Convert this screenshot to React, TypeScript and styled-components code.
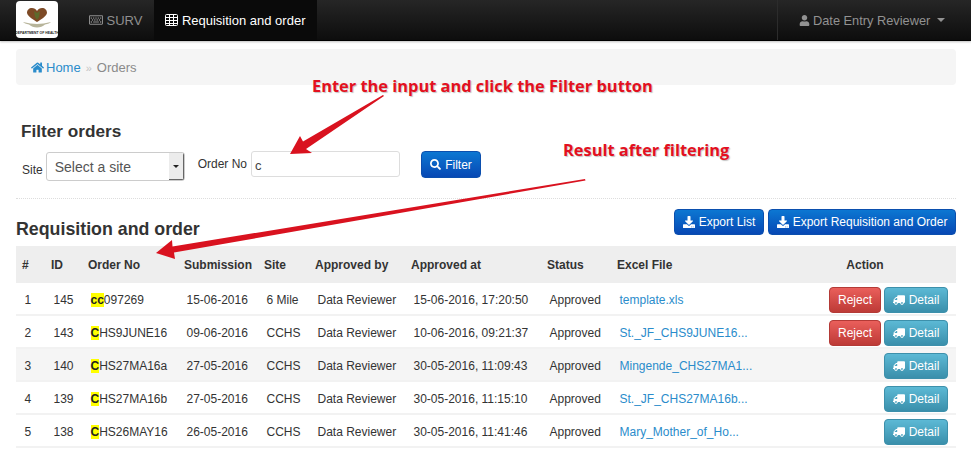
import React from 'react';
import styled, { createGlobalStyle } from 'styled-components';
import { FaDownload, FaHome, FaRegKeyboard, FaSearch, FaTruck, FaUser } from 'react-icons/fa';

const GlobalStyle = createGlobalStyle`
  html, body {
    margin: 0;
    padding: 0;
    background: #fff;
    color: #333;
    font-family: "Liberation Sans", Arial, sans-serif;
    font-size: 12px;
    overflow: hidden;
  }
`;

const Page = styled.div`
  position: relative;
  width: 971px;
  height: 451px;
  overflow: hidden;
`;

const Navbar = styled.nav`
  display: flex;
  align-items: stretch;
  height: 40px;
  padding-left: 16px;
  background: linear-gradient(#262626, #0d0d0d);
  border-bottom: 1px solid #000;
  box-shadow: 0 1px 2px rgba(0, 0, 0, 0.25);
`;

const Logo = styled.svg`
  width: 42px;
  height: 37px;
  margin-top: 1px;
  margin-right: 20px;
`;

const NavItem = styled.a<{ $active?: boolean }>`
  display: flex;
  align-items: center;
  gap: 3.5px;
  padding: 0 12px 0 11px;
  font-size: 13px;
  color: ${p => (p.$active ? '#fff' : '#8f8f8f')};
  background: ${p => (p.$active ? '#0a0a0a' : 'transparent')};

  svg {
    flex: none;
  }
`;

const UserMenu = styled.a`
  display: flex;
  align-items: center;
  gap: 3px;
  margin-left: auto;
  width: 194px;
  box-sizing: border-box;
  padding-left: 21px;
  font-size: 12.8px;
  color: #929292;
  border-left: 1px solid #2c2c2c;
`;

const Caret = styled.span`
  width: 0;
  height: 0;
  margin-left: 4px;
  border-left: 4px solid transparent;
  border-right: 4px solid transparent;
  border-top: 4px solid #929292;
`;

const Main = styled.main`
  padding: 8px 15px 0 16px;
`;

const Breadcrumb = styled.div`
  display: flex;
  align-items: center;
  height: 36px;
  padding: 1px 0 0 15px;
  box-sizing: border-box;
  background: #f5f5f5;
  border-radius: 4px;
  font-size: 13px;
  color: #8a8a8a;
`;

const Link = styled.a`
  color: #2a8ccb;
  text-decoration: none;
`;

const HomeLink = styled(Link)`
  display: flex;
  align-items: center;
  gap: 2px;
`;

const Separator = styled.span`
  margin: 0 5px;
  color: #c4c4c4;
  font-size: 11px;
`;

const FilterPanel = styled.section`
  padding: 37px 0 17px 5px;
  border-bottom: 1px dotted #ddd;
`;

const FilterTitle = styled.h3`
  margin: 0 0 11px;
  font-size: 17.2px;
  line-height: 18px;
  font-weight: bold;
  color: #333;
`;

const FilterRow = styled.div`
  display: flex;
  align-items: flex-start;
`;

const Label = styled.label<{ $top: number; $left: number }>`
  margin-top: ${p => p.$top}px;
  margin-left: ${p => p.$left}px;
  margin-right: 3px;
  font-size: 12px;
  line-height: 15px;
`;

const SelectBox = styled.div`
  display: flex;
  align-items: stretch;
  width: 139px;
  height: 29px;
  margin-top: 1px;
  box-sizing: border-box;
  background: #fff;
  border: 1px solid #ccc;
  border-radius: 3px;
  overflow: hidden;
  font-size: 14px;
  color: #555;
`;

const SelectValue = styled.span`
  flex: 1;
  padding: 6px 0 0 8px;
`;

const SelectArrow = styled.span`
  display: flex;
  align-items: center;
  justify-content: center;
  width: 14px;
  background: #ececec;
  border-right: 1px solid #666;
  border-bottom: 1px solid #666;

  &::after {
    content: '';
    border-left: 3px solid transparent;
    border-right: 3px solid transparent;
    border-top: 3px solid #222;
  }
`;

const TextField = styled.div`
  width: 149px;
  height: 26px;
  margin-left: 1px;
  box-sizing: border-box;
  padding: 6px 0 0 3px;
  background: #fff;
  border: 1px solid #ddd;
  border-radius: 3px;
  font-size: 13px;
  color: #444;
`;

const Button = styled.a<{ $tone: 'blue' | 'red' | 'teal'; $width: number }>`
  display: inline-flex;
  align-items: center;
  justify-content: center;
  gap: 4px;
  width: ${p => p.$width}px;
  height: 26px;
  box-sizing: border-box;
  border-radius: 4px;
  font-size: 12px;
  color: #fff;
  border: 1px solid
    ${p => ({ blue: '#0b4fae', red: '#b33a36', teal: '#3d90ab' }[p.$tone])};
  background: ${p =>
    ({
      blue: 'linear-gradient(#0c77d2, #0748b4)',
      red: 'linear-gradient(#ea5f5b, #bd3a36)',
      teal: 'linear-gradient(#5cb9d5, #3a8fab)',
    }[p.$tone])};
`;

const FilterButton = styled(Button)`
  margin-left: 21px;
  height: 27px;
`;

const TitleBar = styled.div`
  display: flex;
  justify-content: space-between;
  align-items: flex-start;
  height: 37px;
  padding-top: 10px;
`;

const ListTitle = styled.h2`
  margin: 10px 0 0;
  font-size: 17.8px;
  line-height: 20px;
  font-weight: bold;
  color: #333;
`;

const ExportGroup = styled.div`
  display: flex;
  gap: 4px;
`;

const Table = styled.table`
  width: 940px;
  table-layout: fixed;
  border-collapse: collapse;
`;

const HeadCell = styled.th<{ $center?: boolean }>`
  height: 37px;
  padding: ${p => (p.$center ? '0 2px 0 0' : '0 0 0 6px')};
  background: #eee;
  text-align: ${p => (p.$center ? 'center' : 'left')};
  font-size: 12px;
  font-weight: bold;
  color: #333;
`;

const Row = styled.tr<{ $shaded?: boolean }>`
  background: ${p => (p.$shaded ? '#f5f5f5' : '#fff')};
`;

const Cell = styled.td<{ $right?: boolean }>`
  height: 29px;
  padding: 2px ${p => (p.$right ? '8px' : '0')} 0 ${p => (p.$right ? '0' : '8.5px')};
  border-bottom: 2px solid #f2f2f2;
  text-align: ${p => (p.$right ? 'right' : 'left')};
  font-size: 12px;
  color: #333;
  white-space: nowrap;
`;

const Hit = styled.b`
  background: #ff0;
  color: #222;
`;

const Actions = styled.div`
  display: flex;
  justify-content: flex-end;
  gap: 3px;
`;

const FlippedTruck = styled(FaTruck)`
  transform: scaleX(-1);
`;

const Overlay = styled.svg`
  position: absolute;
  inset: 0;
  pointer-events: none;
`;

const Note = styled.div<{ $x: number; $y: number }>`
  position: absolute;
  left: ${p => p.$x}px;
  top: ${p => p.$y}px;
  font-family: "Open Sans", sans-serif;
  font-size: 16.4px;
  line-height: 20px;
  font-weight: bold;
  color: #e3101f;
  white-space: nowrap;
  text-shadow: 1px 1px 1px rgba(120, 120, 120, 0.45);
`;

const TableIcon = () => (
  <svg width="13" height="12" viewBox="0 0 13 12" fill="none" stroke="currentColor" strokeWidth="1">
    <rect x="0.5" y="0.5" width="12" height="11" rx="1" />
    <path d="M0.5 3.5h12M0.5 6.5h12M0.5 9.5h12M4.5 0.5v11M8.5 0.5v11" />
  </svg>
);

const columns = [
  { label: '#', width: 29 },
  { label: 'ID', width: 37 },
  { label: 'Order No', width: 96 },
  { label: 'Submission', width: 80 },
  { label: 'Site', width: 51 },
  { label: 'Approved by', width: 96 },
  { label: 'Approved at', width: 136 },
  { label: 'Status', width: 70 },
  { label: 'Excel File', width: 165 },
  { label: 'Action', width: 180 },
];

const orders = [
  { id: 145, hit: 'cc', rest: '097269', date: '15-06-2016', site: '6 Mile', at: '15-06-2016, 17:20:50', file: 'template.xls', reject: true },
  { id: 143, hit: 'C', rest: 'HS9JUNE16', date: '09-06-2016', site: 'CCHS', at: '10-06-2016, 09:21:37', file: 'St._JF_CHS9JUNE16...', reject: true },
  { id: 140, hit: 'C', rest: 'HS27MA16a', date: '27-05-2016', site: 'CCHS', at: '30-05-2016, 11:09:43', file: 'Mingende_CHS27MA1...', reject: false },
  { id: 139, hit: 'C', rest: 'HS27MA16b', date: '27-05-2016', site: 'CCHS', at: '30-05-2016, 11:15:10', file: 'St._JF_CHS27MA16b...', reject: false },
  { id: 138, hit: 'C', rest: 'HS26MAY16', date: '26-05-2016', site: 'CCHS', at: '30-05-2016, 11:41:46', file: 'Mary_Mother_of_Ho...', reject: false },
];

const App: React.FC = () => (
  <Page>
    <GlobalStyle />
    <Navbar>
      <Logo viewBox="0 0 42 37">
        <rect width="42" height="37" rx="4" fill="#fff" />
        <path d="M21 21c-3-2-9-5-10-9 0-3 2-5 5-5 2 0 4 1 5 3 1-2 3-3 5-3 3 0 5 2 5 5-1 4-7 7-10 9z" fill="#7d4a26" />
        <path d="M18 10l3 2 3-2-1 6-2 3-2-3z" fill="#5e6a2c" />
        <path d="M7 21c5 1 10 2 14 2s9-1 14-2c-1 1-3 2-6 2.500-2 2-5 3-8 3s-6-1-8-3c-3-.5-5-1.500-6-2.500z" fill="#b7b49a" />
        <text x="21" y="33" textAnchor="middle" fontSize="3.4" fontWeight="bold" fill="#222" fontFamily="Liberation Sans">DEPARTMENT OF HEALTH</text>
      </Logo>
      <NavItem>
        <FaRegKeyboard size={14} />
        SURV
      </NavItem>
      <NavItem $active>
        <TableIcon />
        Requisition and order
      </NavItem>
      <UserMenu>
        <FaUser size={11} />
        Date Entry Reviewer
        <Caret />
      </UserMenu>
    </Navbar>

    <Main>
      <Breadcrumb>
        <HomeLink>
          <FaHome size={13} />
          Home
        </HomeLink>
        <Separator>»</Separator>
        Orders
      </Breadcrumb>

      <FilterPanel>
        <FilterTitle>Filter orders</FilterTitle>
        <FilterRow>
          <Label $top={12} $left={1}>Site</Label>
          <SelectBox>
            <SelectValue>Select a site</SelectValue>
            <SelectArrow />
          </SelectBox>
          <Label $top={6} $left={13}>Order No</Label>
          <TextField>c</TextField>
          <FilterButton $tone="blue" $width={60}>
            <FaSearch size={11} />
            Filter
          </FilterButton>
        </FilterRow>
      </FilterPanel>

      <TitleBar>
        <ListTitle>Requisition and order</ListTitle>
        <ExportGroup>
          <Button $tone="blue" $width={90}>
            <FaDownload size={12} />
            Export List
          </Button>
          <Button $tone="blue" $width={188}>
            <FaDownload size={12} />
            Export Requisition and Order
          </Button>
        </ExportGroup>
      </TitleBar>

      <Table>
        <colgroup>
          {columns.map(c => (
            <col key={c.label} width={c.width} />
          ))}
        </colgroup>
        <thead>
          <tr>
            {columns.map(c => (
              <HeadCell key={c.label} $center={c.label === 'Action'}>
                {c.label}
              </HeadCell>
            ))}
          </tr>
        </thead>
        <tbody>
          {orders.map((o, i) => (
            <Row key={o.id} $shaded={i === 2}>
              <Cell>{i + 1}</Cell>
              <Cell>{o.id}</Cell>
              <Cell>
                <Hit>{o.hit}</Hit>
                {o.rest}
              </Cell>
              <Cell>{o.date}</Cell>
              <Cell>{o.site}</Cell>
              <Cell>Data Reviewer</Cell>
              <Cell>{o.at}</Cell>
              <Cell>Approved</Cell>
              <Cell>
                <Link>{o.file}</Link>
              </Cell>
              <Cell $right>
                <Actions>
                  {o.reject && (
                    <Button $tone="red" $width={52}>
                      Reject
                    </Button>
                  )}
                  <Button $tone="teal" $width={64}>
                    <FlippedTruck size={12} />
                    Detail
                  </Button>
                </Actions>
              </Cell>
            </Row>
          ))}
        </tbody>
      </Table>
    </Main>

    <Overlay width="971" height="451" viewBox="0 0 971 451">
      <path d="M383 95 L384 96 L306 149 L312 153 L290 154 L300 136 L303 141.500 Z" fill="#d9121f" />
      <path d="M585 179 L585.500 180.500 L174 252.500 L175 259 L156 253 L172 240 L172.500 246.500 Z" fill="#d9121f" />
    </Overlay>
    <Note $x={312} $y={76}>Enter the input and click the Filter button</Note>
    <Note $x={563} $y={140}>Result after filtering</Note>
  </Page>
);

export default App;
